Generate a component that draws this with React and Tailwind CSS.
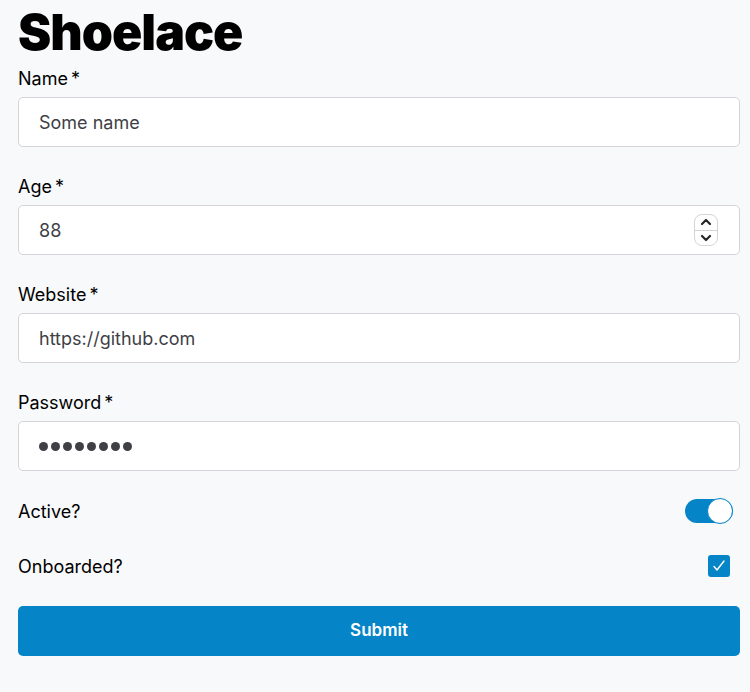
import { useState } from 'react'

const FONT = { fontFamily: 'Inter, "Liberation Sans", sans-serif' }

function Field({ label, children }) {
  return (
    <div className="flex flex-col">
      <label className="text-[18px] leading-[24px] text-black">
        {label}
        <span className="ml-[3px]">*</span>
      </label>
      <div className="mt-[6px] h-[50px] bg-white border border-[#d4d4d8] rounded-[5px] flex items-center pl-[20px] pr-[20px]">
        {children}
      </div>
    </div>
  )
}

function Spinner() {
  return (
    <div className="w-[24px] h-[32px] rounded-[8px] border border-[#d4d4d8] bg-white flex flex-col">
      <div className="flex-1 flex items-center justify-center border-b border-[#d4d4d8]">
        <svg width="12" height="8" viewBox="0 0 12 8" fill="none" stroke="#27272a" strokeWidth="2.2" strokeLinecap="round" strokeLinejoin="round">
          <path d="M2 6l4-4 4 4" />
        </svg>
      </div>
      <div className="flex-1 flex items-center justify-center">
        <svg width="12" height="8" viewBox="0 0 12 8" fill="none" stroke="#27272a" strokeWidth="2.2" strokeLinecap="round" strokeLinejoin="round">
          <path d="M2 2l4 4 4-4" />
        </svg>
      </div>
    </div>
  )
}

export default function App() {
  const [active, setActive] = useState(true)
  const [onboarded, setOnboarded] = useState(true)

  return (
    <div className="min-h-screen bg-[#f8f9fb] pl-[18px] pr-[10px] pt-[4px]" style={FONT}>
      <h1 className="text-[50px] leading-[56px] font-black tracking-[-1px] text-black">Shoelace</h1>

      <div className="flex flex-col gap-[28px] mt-[7px]">
        <Field label="Name">
          <span className="text-[18px] text-[#3f3f46]">Some name</span>
        </Field>
        <Field label="Age">
          <span className="text-[18px] text-[#3f3f46] flex-1">88</span>
          <div className="mr-[1px]">
            <Spinner />
          </div>
        </Field>
        <Field label="Website">
          <span className="text-[18px] text-[#3f3f46]">https://github.com</span>
        </Field>
        <Field label="Password">
          <div className="flex items-center gap-[3px]" aria-label="password">
            {Array.from({ length: 8 }).map((_, i) => (
              <span key={i} className="w-[9px] h-[9px] rounded-full bg-[#3f3f46]" />
            ))}
          </div>
        </Field>
      </div>

      <div className="flex items-center justify-between mt-[26px] h-[28px]">
        <span className="text-[18px] text-black">Active?</span>
        <button
          type="button"
          onClick={() => setActive(!active)}
          className="relative w-[48px] h-[24px] rounded-full bg-[#0584c7] mr-[7px]"
        >
          <span className="absolute right-0 top-[-1px] w-[26px] h-[26px] rounded-full bg-white border border-[#0584c7]" />
        </button>
      </div>

      <div className="flex items-center justify-between mt-[29px] h-[24px]">
        <span className="text-[18px] text-black">Onboarded?</span>
        <button
          type="button"
          onClick={() => setOnboarded(!onboarded)}
          className="w-[22px] h-[22px] rounded-[3px] bg-[#0584c7] flex items-center justify-center mr-[10px]"
        >
          {onboarded && (
            <svg width="16" height="16" viewBox="0 0 16 16" fill="none" stroke="white" strokeWidth="1.4" strokeLinecap="round" strokeLinejoin="round">
              <path d="M3 8.5l3 3.5 7-9" />
            </svg>
          )}
        </button>
      </div>

      <button
        type="button"
        className="mt-[28px] w-full h-[50px] rounded-[5px] bg-[#0584c7] text-white text-[17px] font-semibold"
      >
        Submit
      </button>
    </div>
  )
}
